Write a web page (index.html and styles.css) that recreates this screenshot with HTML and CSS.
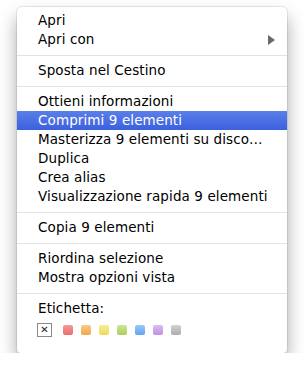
FILE: index.html
```html
<!DOCTYPE html>
<html lang="it">
<head>
    <meta charset="UTF-8">
    <title>Menu contestuale</title>
    <link rel="stylesheet" href="styles.css">
</head>
<body>

    <div class="menu">
        <div class="item">Apri</div>
        <div class="item has-sub">Apri con <span class="arrow"></span></div>
        <div class="sep"></div>
        <div class="item">Sposta nel Cestino</div>
        <div class="sep"></div>
        <div class="item">Ottieni informazioni</div>
        <div class="item selected">Comprimi 9 elementi</div>
        <div class="item">Masterizza 9 elementi su disco…</div>
        <div class="item">Duplica</div>
        <div class="item">Crea alias</div>
        <div class="item">Visualizzazione rapida 9 elementi</div>
        <div class="sep"></div>
        <div class="item">Copia 9 elementi</div>
        <div class="sep"></div>
        <div class="item">Riordina selezione</div>
        <div class="item">Mostra opzioni vista</div>
        <div class="sep"></div>
        <div class="item label">Etichetta:</div>

        <!-- label colours -->
        <div class="swatches">
            <span class="none">&#x2715;</span>
            <span class="dot red"></span>
            <span class="dot orange"></span>
            <span class="dot yellow"></span>
            <span class="dot green"></span>
            <span class="dot blue"></span>
            <span class="dot purple"></span>
            <span class="dot gray"></span>
        </div>
    </div>

</body>
</html>
```

FILE: styles.css
```css
body {
    margin: 0;
    background: #fff;
    font-family: "DejaVu Sans", "Liberation Sans", sans-serif;
    font-size: 13.5px;
    letter-spacing: 0.1px;
    color: #000;
}
.menu {
    width: 270px;
    margin: 7px 0 0 17px;
    padding: 4px 0 16px;
    background: #fff;
    border-radius: 5px 5px 4px 4px;
    box-shadow: 0 0 0 1px rgba(0, 0, 0, 0.08), 0 10px 18px rgba(0, 0, 0, 0.35);
}
.item {
    height: 19px;
    line-height: 19px;
    padding: 0 12px 0 21px;
    white-space: nowrap;
    display: flex;
    align-items: center;
    justify-content: space-between;
}
.selected {
    background: linear-gradient(#5a7fea, #3b60dd);
    color: #fff;
}
.arrow {
    width: 0;
    height: 0;
    border-top: 5px solid transparent;
    border-bottom: 5px solid transparent;
    border-left: 7px solid #6a6a6a;
}
.sep {
    height: 1px;
    background: #e2e2e2;
    margin: 6px 0 5px;
}
.swatches {
    display: flex;
    align-items: center;
    gap: 8px;
    padding: 5px 0 0 20px;
}
.none {
    width: 13px;
    height: 12px;
    border: 1px solid #8a8a8a;
    font-size: 10px;
    line-height: 12px;
    text-align: center;
    color: #222;
    margin-right: 3px;
}
.dot {
    width: 10px;
    height: 10px;
    border-radius: 2px;
}
.red { background: linear-gradient(#f59a98, #ec6b69); }
.orange { background: linear-gradient(#f9c98a, #f3a64b); }
.yellow { background: linear-gradient(#f8ec98, #efd959); }
.green { background: linear-gradient(#cfe59a, #abcd5a); }
.blue { background: linear-gradient(#9acaf8, #5fa4ef); }
.purple { background: linear-gradient(#dcbdf0, #c08ee0); }
.gray { background: linear-gradient(#d2d2d2, #acacac); }
```
